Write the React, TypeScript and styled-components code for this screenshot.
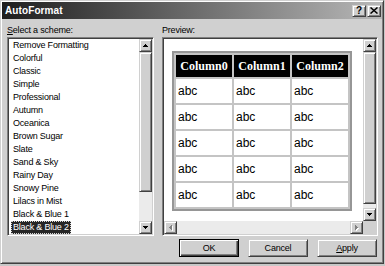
import React from "react";
import styled, { createGlobalStyle, css } from "styled-components";

const FACE = "#d0d0d0";

const GlobalStyle = createGlobalStyle`
  html, body { margin: 0; padding: 0; background: #c8c8c8; }
  body { width: 385px; height: 266px; overflow: hidden; font-family: "Liberation Sans", Arial, sans-serif; }
`;

const raised = css`
  box-sizing: border-box;
  background: ${FACE};
  border: 1px solid;
  border-color: ${FACE} #404040 #404040 ${FACE};
  box-shadow: inset 1px 1px #fff, inset -1px -1px #808080;
`;

const sunken = css`
  box-sizing: border-box;
  border: 1px solid;
  border-color: #808080 #fff #fff #808080;
  box-shadow: inset 1px 1px #404040, inset -1px -1px ${FACE};
  padding: 1px;
  background: #fff;
`;

const Window = styled.div`
  box-sizing: border-box;
  width: 384px;
  height: 264px;
  background: ${FACE};
  border: 1px solid;
  border-color: ${FACE} #404040 #404040 ${FACE};
  box-shadow: inset 1px 1px #fff, inset -1px -1px #808080;
  padding: 1px;
  display: flex;
  flex-direction: column;
`;

const TitleBar = styled.div`
  height: 17px;
  flex: none;
  display: flex;
  align-items: center;
  justify-content: space-between;
  padding: 0 1px 0 3px;
  background: linear-gradient(to right, #1e1e1e, #b8b8b8);
`;

const TitleText = styled.span`
  color: #fff;
  font-weight: bold;
  font-size: 10px;
  letter-spacing: 0.1px;
`;

const TitleButtons = styled.div`
  display: flex;
  gap: 1px;
`;

const TitleButton = styled.div`
  ${raised};
  width: 14px;
  height: 12px;
  display: flex;
  align-items: center;
  justify-content: center;
  font-size: 10px;
  font-weight: bold;
  line-height: 1;
  color: #000;
`;

const Body = styled.div`
  flex: 1;
  display: flex;
  flex-direction: column;
  padding: 0 4px 5px 5px;
`;

const Columns = styled.div`
  display: grid;
  grid-template-columns: 147px 216px;
  column-gap: 8px;
`;

const Column = styled.div`
  display: flex;
  flex-direction: column;
`;

const Label = styled.div`
  box-sizing: border-box;
  height: 18px;
  padding-top: 6px;
  font-size: 9px;
  line-height: 11px;
  letter-spacing: -0.2px;
  color: #000;
`;

const Accel = styled.span`
  text-decoration: underline;
`;

const ListBox = styled.div`
  ${sunken};
  height: 199px;
  display: flex;
`;

const Items = styled.div`
  flex: 1;
  display: flex;
  flex-direction: column;
  overflow: hidden;
`;

const Item = styled.div`
  height: 13px;
  display: flex;
  align-items: center;
  padding-left: 2px;
`;

const ItemText = styled.span<{ $selected?: boolean }>`
  font-size: 9px;
  line-height: 13px;
  letter-spacing: -0.2px;
  padding: 0 2px;
  white-space: nowrap;
  color: ${(p) => (p.$selected ? "#fff" : "#000")};
  background: ${(p) => (p.$selected ? "#262626" : "transparent")};
  outline: ${(p) => (p.$selected ? "1px dotted #d8d8d8" : "none")};
  outline-offset: -1px;
`;

const VScroll = styled.div`
  width: 13px;
  display: flex;
  flex-direction: column;
`;

const HScroll = styled.div`
  height: 13px;
  display: flex;
`;

const ArrowButton = styled.div`
  ${raised};
  width: 13px;
  height: 13px;
  flex: none;
  display: flex;
  align-items: center;
  justify-content: center;
`;

const Thumb = styled.div<{ $size: number }>`
  ${raised};
  flex: none;
  height: ${(p) => p.$size}px;
`;

const Track = styled.div`
  flex: 1;
  background: #ebebeb;
`;

const PreviewBox = styled.div`
  ${sunken};
  height: 199px;
  display: grid;
  grid-template-columns: 1fr 13px;
  grid-template-rows: 1fr 13px;
`;

const PreviewContent = styled.div`
  overflow: hidden;
  padding: 12px 0 0 8px;
`;

const Corner = styled.div`
  background: ${FACE};
`;

const Table = styled.table`
  border: 2px solid #969696;
  border-collapse: separate;
  border-spacing: 2px;
  background: #c4c4c4;
`;

const Th = styled.th`
  width: 56px;
  height: 22px;
  padding: 0;
  background: #000;
  color: #fff;
  font-family: "Liberation Serif", "Times New Roman", serif;
  font-weight: bold;
  font-size: 12px;
  text-align: center;
`;

const Td = styled.td`
  width: 54px;
  height: 24px;
  padding: 0 0 0 2px;
  background: #fff;
  color: #000;
  font-family: "Liberation Sans", Arial, sans-serif;
  font-size: 12px;
  text-align: left;
`;

const ButtonRow = styled.div`
  display: flex;
  justify-content: flex-end;
  gap: 9px;
  margin-top: 3px;
  padding-right: 1px;
`;

const Button = styled.div<{ $default?: boolean }>`
  ${raised};
  width: 60px;
  height: 18px;
  display: flex;
  align-items: center;
  justify-content: center;
  font-size: 9px;
  letter-spacing: -0.2px;
  color: #000;
  ${(p) =>
    p.$default &&
    css`
      border-color: #000;
      box-shadow: inset 1px 1px #fff, inset -1px -1px #404040, inset -2px -2px #808080;
    `}
`;

type Dir = "up" | "down" | "left" | "right";

const Arrow: React.FC<{ dir: Dir; disabled?: boolean }> = ({ dir, disabled }) => {
  const vertical = dir === "up" || dir === "down";
  const w = vertical ? 5 : 3;
  const h = vertical ? 3 : 5;
  const rects: { x: number; y: number; w: number; h: number }[] = [];
  for (let i = 0; i < 3; i++) {
    if (dir === "up") rects.push({ x: 2 - i, y: i, w: 1 + 2 * i, h: 1 });
    if (dir === "down") rects.push({ x: 2 - i, y: 2 - i, w: 1 + 2 * i, h: 1 });
    if (dir === "left") rects.push({ x: i, y: 2 - i, w: 1, h: 1 + 2 * i });
    if (dir === "right") rects.push({ x: 2 - i, y: 2 - i, w: 1, h: 1 + 2 * i });
  }
  return (
    <svg width={w + 1} height={h + 1} viewBox={`0 0 ${w + 1} ${h + 1}`} shapeRendering="crispEdges">
      {disabled &&
        rects.map((r, i) => <rect key={`s${i}`} x={r.x + 1} y={r.y + 1} width={r.w} height={r.h} fill="#fff" />)}
      {rects.map((r, i) => (
        <rect key={i} x={r.x} y={r.y} width={r.w} height={r.h} fill={disabled ? "#808080" : "#000"} />
      ))}
    </svg>
  );
};

const CloseGlyph = () => (
  <svg width="8" height="7" viewBox="0 0 8 7">
    <path d="M0.5 0.5 L7.5 6.5 M7.5 0.5 L0.5 6.5" stroke="#000" strokeWidth="1.5" fill="none" />
  </svg>
);

const schemes = [
  "Remove Formatting",
  "Colorful",
  "Classic",
  "Simple",
  "Professional",
  "Autumn",
  "Oceanica",
  "Brown Sugar",
  "Slate",
  "Sand & Sky",
  "Rainy Day",
  "Snowy Pine",
  "Lilacs in Mist",
  "Black & Blue 1",
  "Black & Blue 2",
];

const columns = ["Column0", "Column1", "Column2"];

export default function App() {
  return (
    <>
      <GlobalStyle />
      <Window>
        <TitleBar>
          <TitleText>AutoFormat</TitleText>
          <TitleButtons>
            <TitleButton>?</TitleButton>
            <TitleButton>
              <CloseGlyph />
            </TitleButton>
          </TitleButtons>
        </TitleBar>
        <Body>
          <Columns>
            <Column>
              <Label>
                <Accel>S</Accel>elect a scheme:
              </Label>
              <ListBox>
                <Items>
                  {schemes.map((s, i) => (
                    <Item key={s}>
                      <ItemText $selected={i === schemes.length - 1}>{s}</ItemText>
                    </Item>
                  ))}
                </Items>
                <VScroll>
                  <ArrowButton>
                    <Arrow dir="up" />
                  </ArrowButton>
                  <Thumb $size={140} />
                  <Track />
                  <ArrowButton>
                    <Arrow dir="down" />
                  </ArrowButton>
                </VScroll>
              </ListBox>
            </Column>
            <Column>
              <Label>Preview:</Label>
              <PreviewBox>
                <PreviewContent>
                  <Table>
                    <thead>
                      <tr>
                        {columns.map((c) => (
                          <Th key={c}>{c}</Th>
                        ))}
                      </tr>
                    </thead>
                    <tbody>
                      {[0, 1, 2, 3, 4].map((r) => (
                        <tr key={r}>
                          {columns.map((c) => (
                            <Td key={c}>abc</Td>
                          ))}
                        </tr>
                      ))}
                    </tbody>
                  </Table>
                </PreviewContent>
                <VScroll>
                  <ArrowButton>
                    <Arrow dir="up" />
                  </ArrowButton>
                  <Thumb $size={152} />
                  <Track />
                  <ArrowButton>
                    <Arrow dir="down" />
                  </ArrowButton>
                </VScroll>
                <HScroll>
                  <ArrowButton>
                    <Arrow dir="left" disabled />
                  </ArrowButton>
                  <Track />
                  <ArrowButton>
                    <Arrow dir="right" disabled />
                  </ArrowButton>
                </HScroll>
                <Corner />
              </PreviewBox>
            </Column>
          </Columns>
          <ButtonRow>
            <Button $default>OK</Button>
            <Button>Cancel</Button>
            <Button>
              <Accel>A</Accel>pply
            </Button>
          </ButtonRow>
        </Body>
      </Window>
    </>
  );
}
